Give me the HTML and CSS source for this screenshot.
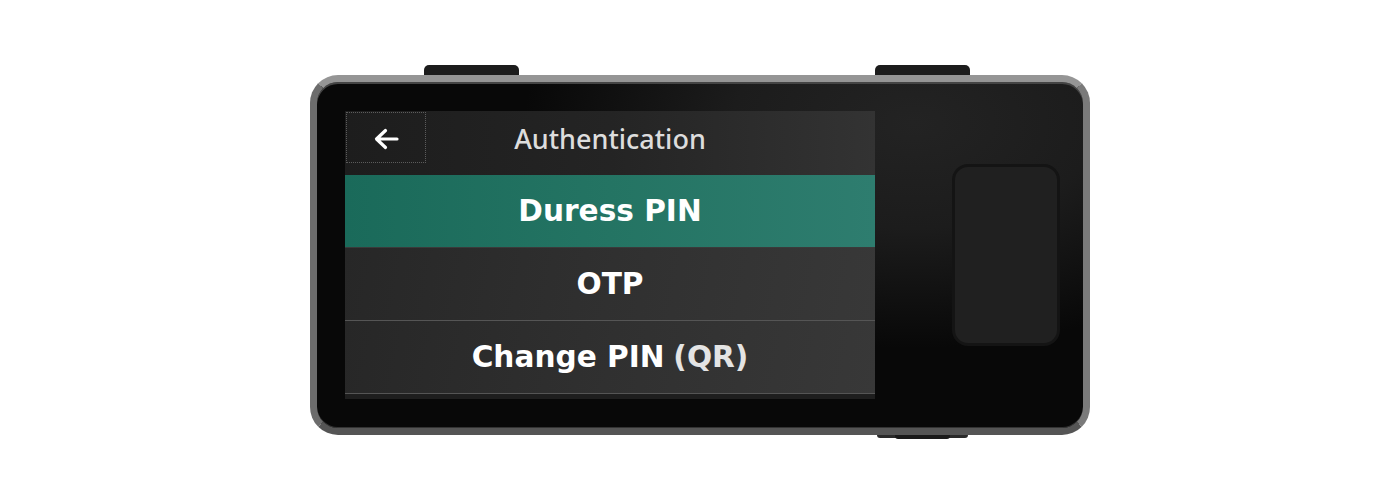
FILE: index.html
```html
<!DOCTYPE html>
<html>
<head>
<meta charset="utf-8">
<link rel="stylesheet" href="styles.css">
</head>
<body>
<div class="stage">
  <div class="device">
    <div class="top-buttons">
      <div class="btn btn-left"></div>
      <div class="btn btn-right"></div>
    </div>
    <div class="body">
      <div class="screen">
        <div class="header">
          <div class="back">
            <svg width="25" height="22" viewBox="0 0 25 22">
              <path d="M23 11H3.5M11.5 2.5L2.5 11L11.5 19.5" fill="none" stroke="#fff" stroke-width="3.2" stroke-linecap="round" stroke-linejoin="round"/>
            </svg>
          </div>
          <div class="title">Authentication</div>
          <div class="spacer"></div>
        </div>
        <div class="row active">Duress PIN</div>
        <div class="row">OTP</div>
        <div class="row">Change PIN <span class="dim">(QR)</span></div>
      </div>
      <div class="pad"></div>
    </div>
    <div class="bottom-buttons">
      <div class="bbtn"><div class="bbtn-inner"></div></div>
    </div>
  </div>
</div>
</body>
</html>
```

FILE: styles.css
```css
html, body {
  margin: 0;
  padding: 0;
  background: #ffffff;
  width: 1400px;
  height: 500px;
  overflow: hidden;
}

.stage {
  display: flex;
  justify-content: center;
  padding-top: 65px;
}

.device {
  width: 780px;
  display: flex;
  flex-direction: column;
}

.top-buttons {
  height: 10px;
  display: flex;
  padding-left: 114px;
  gap: 356px;
}

.btn {
  width: 95px;
  height: 10px;
  background: #1c1c1c;
  border-radius: 5px 5px 0 0;
}

.body {
  box-sizing: border-box;
  width: 780px;
  height: 360px;
  border: 7px solid #7c7c7c;
  border-top-color: #959595;
  border-bottom-color: #555555;
  border-left-color: #6c6c6c;
  border-right-color: #7a7a7a;
  border-radius: 28px;
  background:
    radial-gradient(ellipse 520px 300px at 78% 12%, #232323 0%, #1c1c1c 35%, rgba(10,10,10,0) 75%),
    #080808;
  box-shadow: inset 0 2px 0 #444, inset 0 -1px 0 #333;
  display: flex;
  align-items: center;
  padding-left: 28px;
}

.screen {
  width: 530px;
  height: 288px;
  display: flex;
  flex-direction: column;
  background: #1e1e1e;
  font-family: "DejaVu Sans", sans-serif;
}

.header {
  height: 64px;
  box-sizing: border-box;
  display: grid;
  grid-template-columns: 82px 1fr 82px;
  background: linear-gradient(90deg, #1d1d1d 0%, #242424 50%, #333333 100%);
}

.back {
  margin: 1px 0 0 1px;
  width: 80px;
  height: 51px;
  box-sizing: border-box;
  border: 1px dotted #5c5c5c;
  display: flex;
  align-items: center;
  justify-content: center;
  padding-top: 3px;
}

.title {
  display: flex;
  align-items: center;
  justify-content: center;
  font-family: "Noto Sans", sans-serif;
  font-weight: 500;
  font-size: 27px;
  color: #dddddd;
  padding-bottom: 10px;
}

.row {
  height: 73px;
  box-sizing: border-box;
  display: flex;
  align-items: center;
  justify-content: center;
  gap: 0.3em;
  color: #ffffff;
  font-weight: bold;
  font-size: 29.6px;
  background: linear-gradient(100deg, #272727 0%, #303030 50%, #383838 100%);
  border-bottom: 1px solid #555555;
}

.row .dim {
  color: #e4e4e4;
}

.row.active {
  background: linear-gradient(90deg, #1a6a5a 0%, #247463 50%, #2e7d6f 100%);
  border-bottom: 1px solid #3a3a3a;
}

.pad {
  width: 108px;
  height: 182px;
  box-sizing: border-box;
  margin-left: 77px;
  border-radius: 16px;
  background: #202020;
  border: 3px solid #141414;
}

.bottom-buttons {
  height: 4px;
  display: flex;
  padding-left: 567px;
}

.bbtn {
  width: 91px;
  height: 3px;
  background: #2a2a2a;
  border-radius: 0 0 4px 4px;
  display: flex;
  justify-content: center;
}

.bbtn-inner {
  width: 55px;
  height: 4px;
  background: #1a1a1a;
  border-radius: 0 0 3px 3px;
}
```
